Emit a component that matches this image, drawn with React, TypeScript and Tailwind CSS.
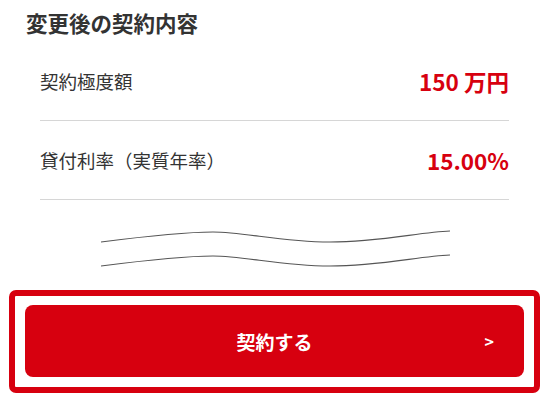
export default function App() {
  const rows = [
    { label: "契約極度額", value: "150 万円" },
    { label: "貸付利率（実質年率）", value: "15.00%" },
  ]

  return (
    <div
      className="w-[547px] h-[400px] bg-white overflow-hidden text-[#333]"
      style={{ fontFamily: '"Noto Sans CJK JP", "Noto Sans", sans-serif' }}
    >
      <h2 className="pl-[26px] pt-[8px] text-[21.5px] leading-[30px] font-bold">
        変更後の契約内容
      </h2>

      <div className="mt-[4px] ml-[40px] mr-[38px]">
        {rows.map((row) => (
          <div
            key={row.label}
            className="h-[79px] flex items-center justify-between border-b-[1.5px] border-[#d6d6d6]"
          >
            <span className="text-[18.5px] leading-none">{row.label}</span>
            <span className="text-[22.5px] leading-none font-bold text-[#d7000f]">{row.value}</span>
          </div>
        ))}
      </div>

      {/* 省略を示す波線 */}
      <svg width="360" height="55" viewBox="0 0 360 55" className="mt-[20px] ml-[90px] block">
        <path
          d="M11 22 C50 17, 90 12, 123 12 S190 22, 240 22 S330 12, 360 11"
          fill="none"
          stroke="#555"
          strokeWidth="1.2"
        />
        <path
          d="M11 46 C50 41, 90 36, 123 36 S190 46, 240 46 S330 36, 360 35"
          fill="none"
          stroke="#555"
          strokeWidth="1.2"
        />
      </svg>

      <div className="mt-[15px] ml-[9px] mr-[7px] border-[6px] border-[#d7000f] rounded-[7px] pt-[9px] pb-[10px] px-[10px]">
        <button className="relative w-full h-[72px] rounded-[8px] bg-[#d7000f] text-white flex items-center justify-center">
          <span className="text-[19px] font-bold translate-y-[1px]">契約する</span>
          <span className="absolute right-[30px] top-1/2 -translate-y-1/2 text-[16px] font-bold">&gt;</span>
        </button>
      </div>
    </div>
  )
}
